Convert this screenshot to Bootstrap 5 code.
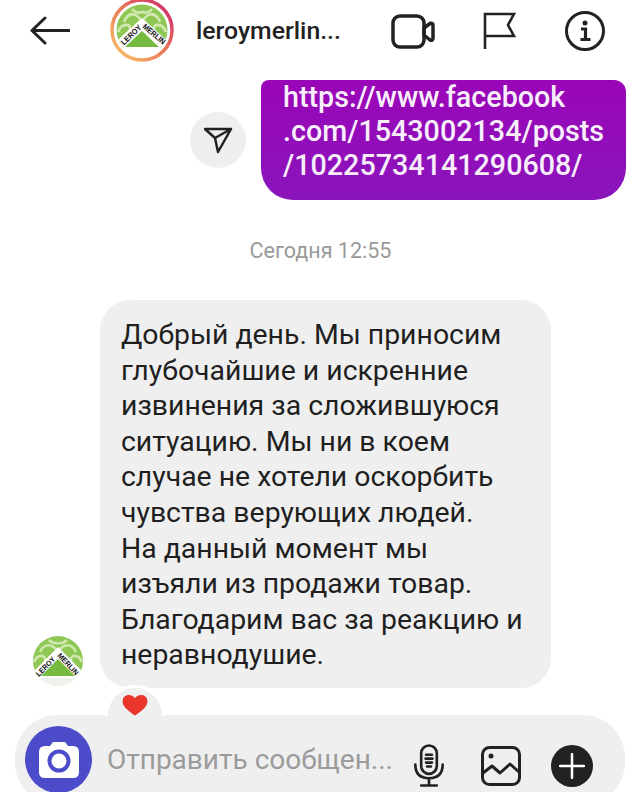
<!DOCTYPE html>
<html lang="ru"><head><meta charset="utf-8">
<link rel="stylesheet" href="https://cdn.jsdelivr.net/npm/bootstrap@5.3.0/dist/css/bootstrap.min.css">
<style>
html,body{height:792px;overflow:hidden;background:#fff}
body{font-family:Roboto,"Liberation Sans",sans-serif;color:#222;width:629px}
.dm-head{height:62px;padding-left:30px}
.dm-back{width:40px;height:30px;margin-right:40px}
.dm-avatar{width:64px;height:64px;margin-top:-2px;margin-right:22px}
.dm-name{font-size:24.800px;font-weight:500;width:195px;white-space:nowrap;color:#222}
.dm-gap-video{margin-right:47px}
.dm-gap-flag{margin-right:48px}
.dm-sent{margin-top:18px;padding-right:3px}
.dm-share{width:56px;height:56px;background:#efefef;margin-right:15px}
.dm-link{width:365px;height:120px;background:linear-gradient(180deg,#9a05b7,#8a15bb);color:#f7eefa;font-weight:500;font-size:28.700px;line-height:34px;padding:0 0 0 22px;border-radius:8px 12px 32px 32px;white-space:nowrap}
.dm-time{margin-top:39px;padding-left:12px;font-size:21.500px;line-height:24px;color:#9a9a9a}
.dm-thread{margin-top:37px;padding-left:33px}
.dm-mini{width:50px;height:50px;margin-right:17px;margin-bottom:2px}
.dm-bubble{width:451px;height:388px;background:#efefef;border-radius:30px;padding:17px 0 0 21px;font-size:28.400px;line-height:35.600px;color:#1f1f1f;white-space:nowrap}
.dm-react{left:5px;top:385px;width:60px;height:31px;background:#efefef;border:3px solid #fff;border-bottom:0;border-radius:30px 30px 0 0;padding-top:7px}
.dm-input{margin:27px 4px 0 15px;height:90px;background:#efefef;border-radius:42px;padding:11px 32px 0 10px}
.dm-cam{width:67px;height:67px;background:#4c4ccb;margin-right:15px}
.dm-ph{font-size:28px;color:#9b9b9b;white-space:nowrap;width:308px;line-height:67px}
.dm-gap-mic{margin-right:36px}
.dm-gap-pic{margin-right:30px}
.dm-plus{width:42px;height:42px;background:#222}
</style></head><body>
<header class="dm-head d-flex align-items-center">
<svg class="dm-back" viewBox="0 0 40 30" fill="none" stroke="#222" stroke-width="3" stroke-linecap="round" stroke-linejoin="round"><path d="M39 14.500H2M15 2 2 14.500 15 27"/></svg>
<svg class="dm-avatar" viewBox="0 0 64 64"><defs><linearGradient id="ig" x1="0" y1="1" x2="1" y2="0"><stop offset="0" stop-color="#f7c96b"/><stop offset=".5" stop-color="#ea7a55"/><stop offset="1" stop-color="#c9206e"/></linearGradient><clipPath id="c1"><circle cx="32" cy="32" r="25.500"/></clipPath></defs>
<circle cx="32" cy="32" r="30" fill="#fff" stroke="url(#ig)" stroke-width="3.500"/>
<g clip-path="url(#c1)"><rect x="5" y="5" width="54" height="45" fill="#8fc755"/><path d="M14 24q4-10 12-7 4 3 6 7 2-4 6-7 8-3 12 7M8 34q3-8 10-7 3 2 2 5M56 34q-3-8-10-7-3 2-2 5M22 11q4 5 10 3 6 2 10-3" stroke="#cfe8ae" stroke-width="2.800" fill="none"/><path d="M32 20 62 47V58H2V47Z" fill="#fff"/><path d="M32 33 49 49H15Z" fill="#76bb3f"/></g>
<text font-family="Liberation Sans,sans-serif" font-size="8" font-weight="700" fill="#111" textLength="25" lengthAdjust="spacingAndGlyphs" transform="translate(14 47.500) rotate(-44)">LEROY</text><text font-family="Liberation Sans,sans-serif" font-size="8" font-weight="700" fill="#111" textLength="27" lengthAdjust="spacingAndGlyphs" transform="translate(32 29.500) rotate(40)">MERLIN</text></svg>
<div class="dm-name">leroymerlin...</div>
<div class="d-flex align-items-center">
<svg width="44" height="36" viewBox="0 0 44 36" fill="none" stroke="#222" stroke-width="3.500" stroke-linejoin="round" class="dm-gap-video"><rect x="2" y="3" width="31" height="31" rx="7"/><path d="M33 15 39 10.500q3-1 3 2V25q0 3-3 2L33 22Z"/></svg>
<svg width="34" height="38" viewBox="0 0 34 38" fill="none" stroke="#222" stroke-width="2.600" class="dm-gap-flag"><path d="M3 37V2H32L26 13 32 24H3"/></svg>
<svg width="42" height="42" viewBox="0 0 42 42" fill="none" stroke="#222"><circle cx="21" cy="21" r="18.500" stroke-width="3"/><circle cx="21" cy="13" r="2.500" fill="#222" stroke="none"/><path d="M17 19h4.500v10M16.500 29.500h10" stroke-width="3.200"/></svg>
</div>
</header>
<section class="dm-sent d-flex justify-content-end align-items-center">
<div class="dm-share rounded-circle d-flex align-items-center justify-content-center"><svg width="30" height="28" viewBox="0 0 30 28" fill="none" stroke="#222" stroke-width="2.500" stroke-linejoin="round"><path d="M2 3H28L15 26 12 12Z M12 12 28 3"/></svg></div>
<div class="dm-link">https://www.facebook<br>.com/1543002134/posts<br>/10225734141290608/</div>
</section>
<div class="dm-time text-center">Сегодня 12:55</div>
<section class="dm-thread d-flex align-items-end">
<svg class="dm-mini" viewBox="0 0 50 50"><defs><clipPath id="c2"><circle cx="25" cy="25" r="25"/></clipPath></defs><g clip-path="url(#c2)"><rect width="50" height="42" fill="#8fc755"/><path d="M7 16q4-9 12-6 4 2 6 6 2-4 6-6 8-3 12 6M1 26q3-7 9-6 3 2 2 5M49 26q-3-7-9-6-3 2-2 5M16 4q4 4 9 3 5 1 9-3" stroke="#cfe8ae" stroke-width="2.600" fill="none"/><path d="M25 11 52 38V50H-2V38Z" fill="#fff"/><path d="M25 23 42 40H8Z" fill="#76bb3f"/><rect y="42" width="50" height="8" fill="#eef2ea"/></g>
<text font-family="Liberation Sans,sans-serif" font-size="7.500" font-weight="700" fill="#111" textLength="24" lengthAdjust="spacingAndGlyphs" transform="translate(6 41) rotate(-46)">LEROY</text><text font-family="Liberation Sans,sans-serif" font-size="7.500" font-weight="700" fill="#111" textLength="27" lengthAdjust="spacingAndGlyphs" transform="translate(24 20) rotate(47)">MERLIN</text></svg>
<div class="dm-bubble position-relative">Добрый день. Мы приносим<br>глубочайшие и искренние<br>извинения за сложившуюся<br>ситуацию. Мы ни в коем<br>случае не хотели оскорбить<br>чувства верующих людей.<br>На данный момент мы<br>изъяли из продажи товар.<br>Благодарим вас за реакцию и<br>неравнодушие.
<div class="dm-react position-absolute"><svg class="d-block mx-auto" width="26" height="21" viewBox="0 0 26 22"><path d="M13 21.500C5 16 0 12 0 6.500 0 2.500 3 0 6.500 0 9.500 0 12 1.500 13 3.500 14 1.500 16.500 0 19.500 0 23 0 26 2.500 26 6.500 26 12 21 16 13 21.500Z" fill="#e8362d"/></svg></div></div>
</section>
<footer class="dm-input d-flex">
<div class="dm-cam rounded-circle d-flex align-items-center justify-content-center flex-shrink-0"><svg width="42" height="38" viewBox="0 0 42 38"><path d="M7 5H12L15 1H27L30 5H35Q41 5 41 11V31Q41 37 35 37H7Q1 37 1 31V11Q1 5 7 5Z" fill="#fff"/><circle cx="21" cy="20" r="9.500" fill="none" stroke="#4c4ccb" stroke-width="4"/></svg></div>
<div class="dm-ph">Отправить сообщен...</div>
<div class="d-flex align-items-center">
<svg width="32" height="43" viewBox="0 0 32 44" fill="none" stroke="#222" stroke-width="2.700" stroke-linecap="round" class="dm-gap-mic"><rect x="8" y="1.500" width="16" height="29" rx="8"/><path d="M2 21q0 14 14 14 14 0 14-14M16 35v7M8 42.500h16M13 11h6M12.500 15h7M13 19h6M14 23h4"/></svg>
<svg width="40" height="40" viewBox="0 0 40 40" fill="none" stroke="#222" stroke-width="3" stroke-linejoin="round" class="dm-gap-pic"><rect x="1.500" y="1.500" width="37" height="37" rx="7"/><circle cx="10" cy="10" r="2.500" fill="#222" stroke="none"/><path d="M2 27 11 20 19 27 29 18 38 26"/></svg>
<div class="dm-plus rounded-circle d-flex align-items-center justify-content-center flex-shrink-0"><svg width="26" height="26" viewBox="0 0 26 26" stroke="#fff" stroke-width="2.500" stroke-linecap="round"><path d="M13 1V25M1 13H25"/></svg></div>
</div>
</footer>
</body></html>
